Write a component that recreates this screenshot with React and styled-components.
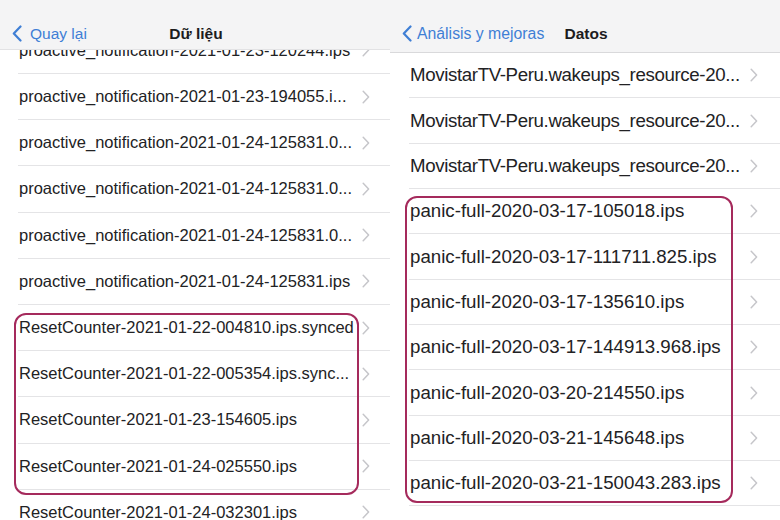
import styled, { createGlobalStyle } from 'styled-components'

const GlobalStyle = createGlobalStyle`
  * {
    margin: 0;
    padding: 0;
    box-sizing: border-box;
  }
  body {
    background: #fff;
    font-family: "Liberation Sans", Arial, sans-serif;
    color: #1f1f21;
  }
`

const Screen = styled.div`
  display: grid;
  grid-template-columns: 390px 390px;
  width: 780px;
  height: 520px;
  overflow: hidden;
`

const Panel = styled.section`
  position: relative;
  height: 520px;
  overflow: hidden;
  background: #fff;
`

const NavBar = styled.header`
  position: relative;
  z-index: 2;
  display: grid;
  grid-template-columns: 1fr auto 1fr;
  align-items: center;
  height: ${p => p.$height}px;
  padding: ${p => p.$padTop}px 10px 0 ${p => p.$padLeft}px;
  background: #f4f4f5;
  border-bottom: 1px solid ${p => p.$line};
`

const Back = styled.div`
  display: flex;
  align-items: center;
  gap: ${p => p.$gap}px;
  color: #3f7fd5;
  font-size: ${p => p.$size}px;
  white-space: nowrap;
`

const Title = styled.div`
  font-size: 15.5px;
  font-weight: 700;
  color: #1c1c1e;
  text-align: center;
`

const List = styled.div`
  margin-top: ${p => p.$shift}px;
`

const Row = styled.div`
  height: ${p => p.$height}px;
  padding-left: ${p => p.$inset}px;
`

const RowInner = styled.div`
  display: flex;
  align-items: center;
  height: 100%;
  padding-left: 1px;
  padding-right: ${p => p.$padRight}px;
  border-bottom: 1px solid #e4e4e6;
`

const Name = styled.span`
  flex: 1;
  min-width: 0;
  font-size: ${p => p.$size}px;
  letter-spacing: ${p => (p.$tight ? '-0.37px' : '0')};
  white-space: nowrap;
  overflow: hidden;
  color: #222224;
`

const Highlight = styled.div`
  position: absolute;
  z-index: 1;
  border: 2.5px solid #a52a5c;
  border-radius: 12px;
  pointer-events: none;
`

const BackIcon = ({ w, h }) => (
  <svg width={w} height={h} viewBox="0 0 10 17" fill="none">
    <polyline points="8.5,1.5 1.8,8.5 8.5,15.5" stroke="#3f7fd5" strokeWidth="2.2" strokeLinecap="round" strokeLinejoin="round" />
  </svg>
)

const Chevron = () => (
  <svg width="8" height="14" viewBox="0 0 8 14" fill="none">
    <polyline points="1.2,1.2 6.6,7 1.2,12.8" stroke="#c6c6ca" strokeWidth="1.5" strokeLinecap="round" strokeLinejoin="round" />
  </svg>
)

const leftFiles = [
  'proactive_notification-2021-01-23-120244.ips',
  'proactive_notification-2021-01-23-194055.i...',
  'proactive_notification-2021-01-24-125831.0...',
  'proactive_notification-2021-01-24-125831.0...',
  'proactive_notification-2021-01-24-125831.0...',
  'proactive_notification-2021-01-24-125831.ips',
  'ResetCounter-2021-01-22-004810.ips.synced',
  'ResetCounter-2021-01-22-005354.ips.sync...',
  'ResetCounter-2021-01-23-154605.ips',
  'ResetCounter-2021-01-24-025550.ips',
  'ResetCounter-2021-01-24-032301.ips',
]

const rightFiles = [
  { name: 'MovistarTV-Peru.wakeups_resource-20...', tight: true },
  { name: 'MovistarTV-Peru.wakeups_resource-20...', tight: true },
  { name: 'MovistarTV-Peru.wakeups_resource-20...', tight: true },
  { name: 'panic-full-2020-03-17-105018.ips' },
  { name: 'panic-full-2020-03-17-111711.825.ips' },
  { name: 'panic-full-2020-03-17-135610.ips' },
  { name: 'panic-full-2020-03-17-144913.968.ips' },
  { name: 'panic-full-2020-03-20-214550.ips' },
  { name: 'panic-full-2020-03-21-145648.ips' },
  { name: 'panic-full-2020-03-21-150043.283.ips' },
]

const FileList = ({ files, shift, height, inset, padRight, size }) => (
  <List $shift={shift}>
    {files.map((f, i) => {
      const file = typeof f === 'string' ? { name: f } : f
      return (
        <Row key={i} $height={height} $inset={inset}>
          <RowInner $padRight={padRight}>
            <Name $size={size} $tight={file.tight}>{file.name}</Name>
            <Chevron />
          </RowInner>
        </Row>
      )
    })}
  </List>
)

const App = () => {
  return (
    <>
      <GlobalStyle />
      <Screen>
        <Panel>
          <NavBar $height={50} $padTop={18} $padLeft={12} $line="#e2e2e4">
            <Back $gap={8} $size={15.5}>
              <BackIcon w={10} h={17} />
              Quay lại
            </Back>
            <Title>Dữ liệu</Title>
            <span />
          </NavBar>
          <FileList files={leftFiles} shift={-22.2} height={46.2} inset={18} padRight={20} size={16.5} />
          <Highlight style={{ left: 14, top: 313, width: 345, height: 182 }} />
        </Panel>
        <Panel>
          <NavBar $height={53} $padTop={15} $padLeft={12} $line="#d9d9db">
            <Back $gap={5} $size={15.8}>
              <BackIcon w={10} h={17} />
              Análisis y mejoras
            </Back>
            <Title>Datos</Title>
            <span />
          </NavBar>
          <FileList files={rightFiles} shift={0} height={45.35} inset={19} padRight={22} size={18.7} />
          <Highlight style={{ left: 15, top: 196, width: 328, height: 307 }} />
        </Panel>
      </Screen>
    </>
  )
}

export default App
